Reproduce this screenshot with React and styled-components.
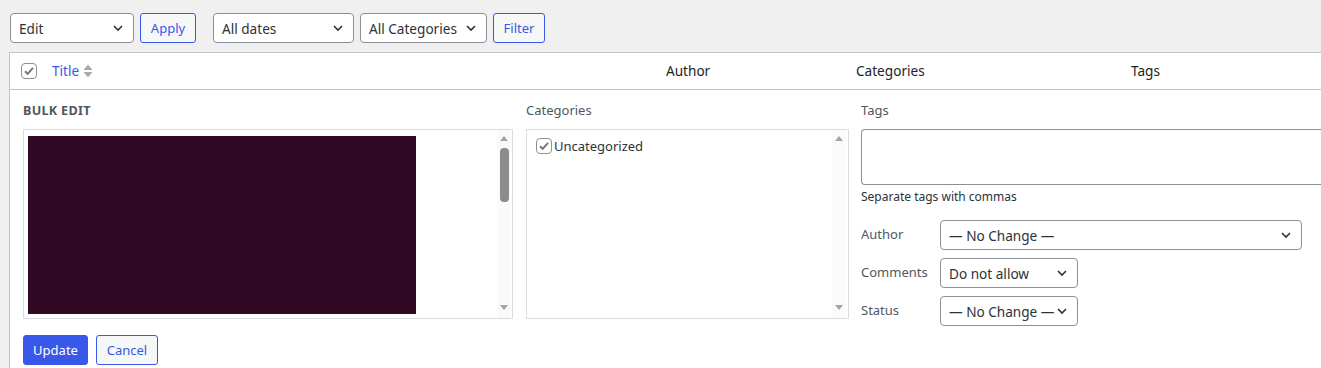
import React from 'react';
import styled, { createGlobalStyle } from 'styled-components';

const GlobalStyle = createGlobalStyle`
  body {
    margin: 0;
    background: #f0f0f1;
    font-family: "Noto Sans", "Open Sans", sans-serif;
    color: #3c434a;
    overflow: hidden;
  }
`;

const Page = styled.div`
  padding: 13px 0 0 9px;
`;

const Toolbar = styled.div`
  display: flex;
  align-items: center;
  padding-left: 1px;
  height: 30px;
  margin-bottom: 9px;
`;

const Group = styled.div`
  display: flex;
  gap: 6px;
  margin-right: ${p => p.gap || 0}px;
`;

const SelectBox = styled.div`
  box-sizing: border-box;
  width: ${p => p.w}px;
  height: 30px;
  border: 1px solid #8c8f94;
  border-radius: 4px;
  background: #fff;
  display: flex;
  align-items: center;
  justify-content: space-between;
  padding: 0 9px 0 8px;
  font-size: 13.6px;
  color: #2c3338;
  white-space: nowrap;
`;

const Btn = styled.div`
  box-sizing: border-box;
  height: 30px;
  width: ${p => p.w}px;
  display: flex;
  align-items: center;
  justify-content: center;
  border-radius: 3px;
  font-size: 13px;
  border: 1px solid #3858e9;
  background: ${p => (p.primary ? '#3858e9' : '#f6f7f7')};
  color: ${p => (p.primary ? '#fff' : '#3858e9')};
`;

const Table = styled.div`
  width: calc(100% + 40px);
  background: #fff;
  border: 1px solid #c3c4c7;
  box-sizing: border-box;
`;

const HeadRow = styled.div`
  display: grid;
  grid-template-columns: 34px 614px 190px 275px 1fr;
  height: 36px;
  align-items: center;
  border-bottom: 1px solid #c3c4c7;
  font-size: 13.6px;
  color: #1d2327;
`;

const HeadCell = styled.div`
  padding-left: ${p => (p.check ? 11 : 8)}px;
  display: flex;
  align-items: center;
  gap: 4px;
  margin-top: -1px;
`;

const TitleLink = styled.span`
  color: #3858e9;
`;

const Check = styled.div`
  width: 16px;
  height: 16px;
  flex: none;
  box-sizing: border-box;
  border: 1px solid #8c8f94;
  border-radius: 4px;
  background: #fff;
  display: flex;
  align-items: center;
  justify-content: center;
`;

const EditRow = styled.div`
  display: flex;
  padding: 12px 0 0 13px;
  height: 277px;
`;

const Column = styled.div`
  width: ${p => (p.w ? `${p.w}px` : 'auto')};
  flex: ${p => (p.w ? 'none' : 1)};
  margin-right: ${p => p.mr || 0}px;
  display: flex;
  flex-direction: column;
`;

const Legend = styled.div`
  font-size: 12.6px;
  font-weight: 700;
  letter-spacing: 0.3px;
  text-transform: uppercase;
  color: #50575e;
  height: 17px;
  line-height: 17px;
  margin-bottom: 10px;
`;

const FieldLabel = styled.div`
  font-size: 13px;
  color: #50575e;
  height: 17px;
  line-height: 17px;
  margin-bottom: 10px;
`;

const ListBox = styled.div`
  box-sizing: border-box;
  height: 190px;
  border: 1px solid #dcdcde;
  background: #fff;
  display: flex;
`;

const ListInner = styled.div`
  flex: 1;
  padding: ${p => p.pad};
`;

const DarkBlock = styled.div`
  width: 388px;
  height: 178px;
  background: #300a24;
`;

const Track = styled.div`
  width: 14px;
  background: #fafafa;
  display: flex;
  flex-direction: column;
  align-items: center;
  justify-content: space-between;
  padding: 6px 0 8px;
  margin-right: ${p => p.mr || 0}px;
`;

const Arrow = styled.div`
  width: 0;
  height: 0;
  border-left: 4px solid transparent;
  border-right: 4px solid transparent;
  ${p => (p.down ? 'border-top: 5px solid #a3a3a3;' : 'border-bottom: 5px solid #a3a3a3;')}
`;

const Thumb = styled.div`
  width: 9px;
  height: 54px;
  border-radius: 4px;
  background: #8c8c8c;
  margin-top: 7px;
  margin-bottom: auto;
`;

const CatItem = styled.label`
  display: flex;
  align-items: center;
  gap: 2px;
  font-size: 13px;
  color: #2c3338;
`;

const TagArea = styled.div`
  box-sizing: border-box;
  height: 56px;
  border: 1px solid #8c8f94;
  border-right: none;
  border-radius: 4px 0 0 4px;
  background: #fff;
`;

const Hint = styled.div`
  font-size: 12px;
  color: #2c3338;
  margin: 4px 0 15px;
  line-height: 16px;
`;

const FieldRow = styled.div`
  display: flex;
  align-items: center;
  margin-bottom: 8px;
`;

const RowLabel = styled.div`
  width: 79px;
  font-size: 13px;
  color: #50575e;
  margin-bottom: 3px;
`;

const Actions = styled.div`
  display: flex;
  gap: 8px;
  margin-top: 17px;
  margin-top: 16px;
`;

const Chevron = () => (
  <svg width="12" height="12" viewBox="0 0 12 12" fill="none">
    <path d="M2 4l4 4 4-4" stroke="#2c3338" strokeWidth="1.6" />
  </svg>
);

const Tick = () => (
  <svg width="12" height="12" viewBox="0 0 12 12" fill="none">
    <path d="M2 6.2l2.7 2.7 5.3-6" stroke="#72777c" strokeWidth="2" />
  </svg>
);

const SortArrows = () => (
  <svg width="10" height="16" viewBox="0 0 10 16">
    <path d="M0.5 7l4.5-5.5 4.5 5.5z" fill="#a7aaad" />
    <path d="M0.5 9l4.5 5.5 4.5-5.5z" fill="#a7aaad" />
  </svg>
);

const Select = ({ w, children }) => (
  <SelectBox w={w}>
    <span>{children}</span>
    <Chevron />
  </SelectBox>
);

export default function App() {
  return (
    <Page>
      <GlobalStyle />
      <Toolbar>
        <Group gap={17}>
          <Select w={124}>Edit</Select>
          <Btn w={56}>Apply</Btn>
        </Group>
        <Group>
          <Select w={141}>All dates</Select>
          <Select w={127}>All Categories</Select>
          <Btn w={52}>Filter</Btn>
        </Group>
      </Toolbar>

      <Table>
        <HeadRow>
          <HeadCell check>
            <Check><Tick /></Check>
          </HeadCell>
          <HeadCell>
            <TitleLink>Title</TitleLink>
            <SortArrows />
          </HeadCell>
          <HeadCell>Author</HeadCell>
          <HeadCell>Categories</HeadCell>
          <HeadCell>Tags</HeadCell>
        </HeadRow>

        <EditRow>
          <Column w={490} mr={13}>
            <Legend>Bulk Edit</Legend>
            <ListBox>
              <ListInner pad="6px 0 0 4px">
                <DarkBlock />
              </ListInner>
              <Track mr={1}>
                <Arrow />
                <Thumb />
                <Arrow down />
              </Track>
            </ListBox>
            <Actions>
              <Btn primary w={65}>Update</Btn>
              <Btn w={62}>Cancel</Btn>
            </Actions>
          </Column>

          <Column w={323} mr={12}>
            <FieldLabel>Categories</FieldLabel>
            <ListBox>
              <ListInner pad="7px 0 0 9px">
                <CatItem>
                  <Check><Tick /></Check>
                  Uncategorized
                </CatItem>
              </ListInner>
              <Track mr={2}>
                <Arrow />
                <Arrow down />
              </Track>
            </ListBox>
          </Column>

          <Column>
            <FieldLabel>Tags</FieldLabel>
            <TagArea />
            <Hint>Separate tags with commas</Hint>
            <FieldRow>
              <RowLabel>Author</RowLabel>
              <Select w={362}>— No Change —</Select>
            </FieldRow>
            <FieldRow>
              <RowLabel>Comments</RowLabel>
              <Select w={138}>Do not allow</Select>
            </FieldRow>
            <FieldRow>
              <RowLabel>Status</RowLabel>
              <Select w={138}>— No Change —</Select>
            </FieldRow>
          </Column>
        </EditRow>
      </Table>
    </Page>
  );
}
